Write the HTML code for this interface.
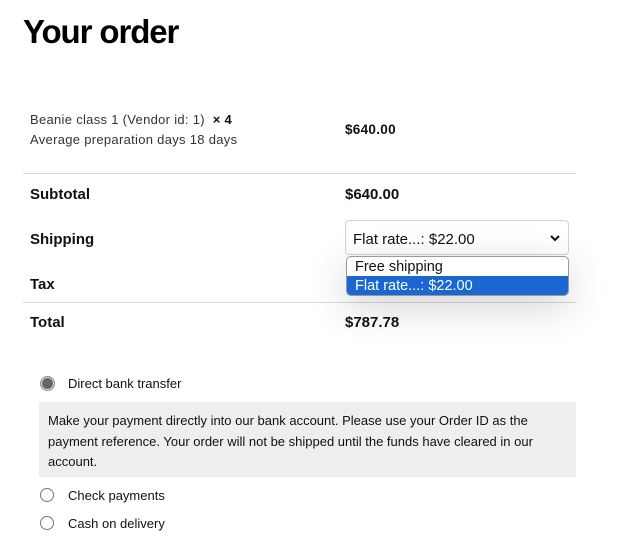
<!DOCTYPE html>
<html><head><style>
body{margin:0;width:621px;height:547px;background:#fff;font-family:"Liberation Sans",sans-serif;color:#111;position:relative;overflow:hidden}
.a{position:absolute;white-space:nowrap}
.b{font-weight:bold}
.hr{position:absolute;left:23px;width:553px;height:1px;background:#d8d8d8}
.r{position:absolute;left:40px;width:12px;height:12px;border:1.5px solid #777;border-radius:50%;background:#fff}
</style></head><body>
<div class="a b" style="left:23px;top:13px;font-size:33px;letter-spacing:-1.1px;color:#000">Your order</div>
<div class="a" style="left:30px;top:112px;font-size:13px;letter-spacing:0.3px;color:#333">Beanie class 1 (Vendor id: 1) &nbsp;<b style="color:#111">× 4</b></div>
<div class="a" style="left:30px;top:132px;font-size:13px;letter-spacing:0.3px;color:#333">Average preparation days 18 days</div>
<div class="a b" style="left:345px;top:122px;font-size:13.5px;letter-spacing:0.3px">$640.00</div>
<div class="hr" style="top:173px"></div>
<div class="a b" style="left:30px;top:186px;font-size:15px">Subtotal</div>
<div class="a b" style="left:345px;top:186px;font-size:15px">$640.00</div>
<div class="a b" style="left:30px;top:231px;font-size:15px">Shipping</div>
<div class="a" style="left:345px;top:220px;width:224px;height:35px;border:1px solid #d6d3cc;border-radius:4px;box-sizing:border-box"></div>
<div class="a" style="left:353px;top:231px;font-size:15px">Flat rate...: $22.00</div>
<svg class="a" style="left:549px;top:233px" width="12" height="10"><path d="M2 3 L6 7 L10 3" stroke="#111" stroke-width="2" fill="none"/></svg>
<div class="a b" style="left:30px;top:276px;font-size:15px">Tax</div>
<div class="hr" style="top:302px"></div>
<div class="a" style="left:346px;top:256px;width:223px;height:40px;border:1px solid #999;border-radius:5px;overflow:hidden;box-sizing:border-box;background:#fff;box-shadow:0 10px 40px rgba(0,0,0,.18)">
<div style="height:19px;font-size:14.5px;padding-left:8px;line-height:20px">Free shipping</div>
<div style="height:20px;font-size:14.5px;padding-left:8px;line-height:20px;background:#1a67d2;color:#fff">Flat rate...: $22.00</div>
</div>
<div class="a b" style="left:30px;top:314px;font-size:15px">Total</div>
<div class="a b" style="left:345px;top:314px;font-size:15px">$787.78</div>
<div class="a" style="left:40px;top:376px;width:15px;height:15px;border-radius:50%;background:#666;box-sizing:border-box;border:1px solid #888"></div>
<div class="a" style="left:41px;top:377px;width:13px;height:13px;border-radius:50%;border:1.5px solid #ddd;box-sizing:border-box"></div>
<div class="a" style="left:68px;top:376px;font-size:13px">Direct bank transfer</div>
<div class="a" style="left:39px;top:402px;width:537px;height:75px;background:#eee"></div>
<div class="a" style="left:48px;top:411px;font-size:13px;line-height:20.5px;white-space:normal;width:520px">Make your payment directly into our bank account. Please use your Order ID as the payment reference. Your order will not be shipped until the funds have cleared in our account.</div>
<div class="r" style="top:488px"></div>
<div class="a" style="left:68px;top:488px;font-size:13px">Check payments</div>
<div class="r" style="top:516px"></div>
<div class="a" style="left:68px;top:516px;font-size:13px">Cash on delivery</div>
</body></html>
